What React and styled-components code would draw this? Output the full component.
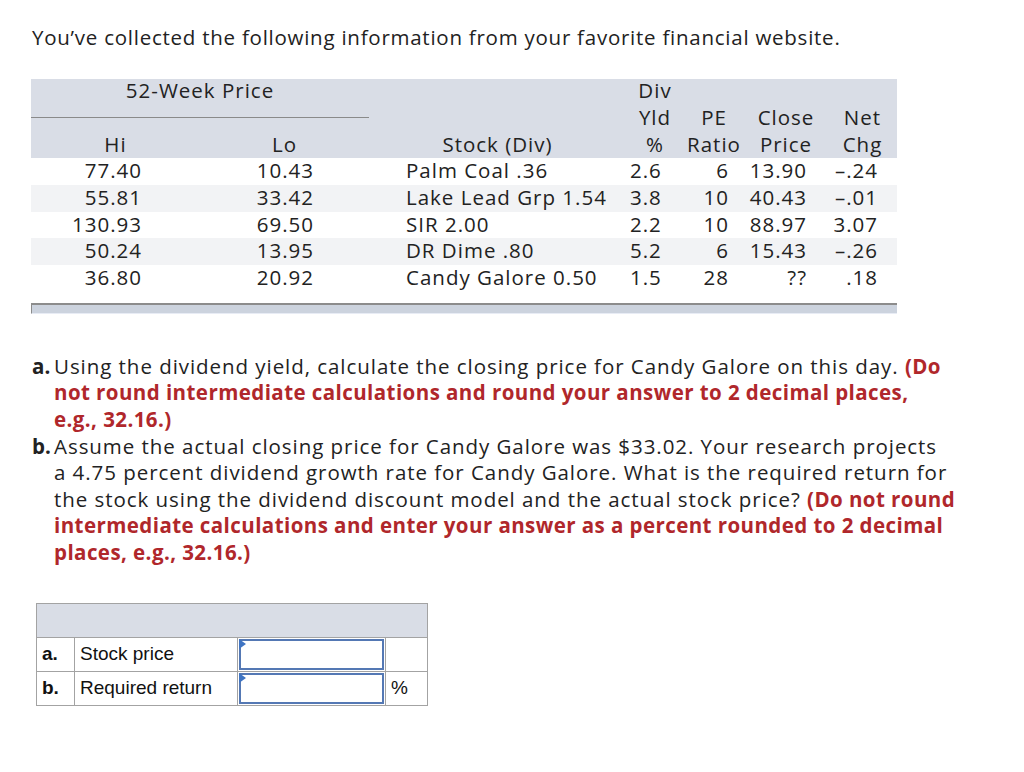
import React from "react";
import styled, { createGlobalStyle } from "styled-components";

const Global = createGlobalStyle`
  html, body { margin: 0; padding: 0; background: #fff; }
  body { font-family: "Open Sans", "Lato", sans-serif; color: #222; }
`;

const Page = styled.div`
  width: 1024px;
  min-height: 772px;
  padding: 24px 0 0 32px;
  box-sizing: border-box;
`;

const Title = styled.p`
  margin: 0;
  font-size: 20.5px;
  line-height: 26px;
  letter-spacing: 0.75px;
`;

const COLS = "169px 169px 257px 58px 60px 84px 69px";

const DataTable = styled.div`
  margin: 29px 0 0 -1px;
  width: 866px;
  display: flex;
  flex-direction: column;
  font-size: 20.5px;
  letter-spacing: 1px;
`;

const Head = styled.div`
  display: grid;
  grid-template-columns: ${COLS};
  grid-template-rows: 27px 27px 25px;
  align-items: start;
  background: #d9dde6;
`;

const HeadCell = styled.div`
  grid-column: ${(p) => p.$col};
  grid-row: ${(p) => p.$row};
  text-align: center;
  line-height: 22px;
`;

const GroupCell = styled.div`
  grid-column: 1 / 3;
  grid-row: 1 / 3;
  height: 38px;
  border-bottom: 1px solid #8a8a8a;
  text-align: center;
  line-height: 22px;
`;

const Row = styled.div`
  display: grid;
  grid-template-columns: ${COLS};
  height: 26.75px;
  line-height: 25.5px;
  background: ${(p) => (p.$shade ? "#f2f3f5" : "#fff")};
`;

const Cell = styled.div`
  text-align: ${(p) => p.$align || "right"};
  padding-right: ${(p) => p.$pr || 0}px;
  padding-left: ${(p) => p.$pl || 0}px;
  white-space: nowrap;
`;

const BottomBar = styled.div`
  margin-top: 11px;
  height: 8px;
  background: #ccd3de;
  border-top: 2px solid #8c8c8c;
  border-left: 1px solid #8c8c8c;
  border-bottom: 1px solid #e8ecf5;
`;

const Questions = styled.div`
  margin-top: 39px;
  font-size: 20.5px;
  line-height: 26.6px;
  letter-spacing: 0.95px;
`;

const Item = styled.div`
  display: grid;
  grid-template-columns: 22px auto;
  white-space: nowrap;
`;

const Letter = styled.span`
  font-weight: 700;
  letter-spacing: 0;
`;

const Red = styled.span`
  color: #b0272b;
  font-weight: 700;
  letter-spacing: 0.43px;
`;

const AnswerTable = styled.table`
  margin: 37px 0 0 4px;
  border-collapse: collapse;
  font-family: "Liberation Sans", Arial, sans-serif;
  font-size: 19px;
  letter-spacing: 0;
  color: #111;
`;

const HeaderCell = styled.td`
  height: 33px;
  padding: 0;
  background: #d9dde6;
  border: 1px solid #a3a3a3;
`;

const Td = styled.td`
  height: 33px;
  border: 1px solid #a3a3a3;
  padding: 0 5px;
  width: ${(p) => p.$w}px;
  font-weight: ${(p) => (p.$bold ? 700 : 400)};
  box-sizing: border-box;
`;

const InputTd = styled.td`
  width: 148px;
  height: 33px;
  border: 1px solid #a3a3a3;
  padding: 1px;
  box-sizing: border-box;
`;

const InputBox = styled.div`
  position: relative;
  height: 31px;
  border: 2px solid #5478b4;
  box-sizing: border-box;
  &::before {
    content: "";
    position: absolute;
    left: -2px;
    top: -2px;
    border-top: 5px solid transparent;
    border-bottom: 5px solid transparent;
    border-left: 7px solid #3f74c3;
  }
`;

const rows = [
  ["77.40", "10.43", "Palm Coal .36", "2.6", "6", "13.90", "–.24"],
  ["55.81", "33.42", "Lake Lead Grp 1.54", "3.8", "10", "40.43", "–.01"],
  ["130.93", "69.50", "SIR 2.00", "2.2", "10", "88.97", "3.07"],
  ["50.24", "13.95", "DR Dime .80", "5.2", "6", "15.43", "–.26"],
  ["36.80", "20.92", "Candy Galore 0.50", "1.5", "28", "??", ".18"],
];

export default function App() {
  return (
    <Page>
      <Global />
      <Title>You’ve collected the following information from your favorite financial website.</Title>
      <DataTable>
        <Head>
          <GroupCell>52-Week Price</GroupCell>
          <HeadCell $col={4} $row={1}>Div</HeadCell>
          <HeadCell $col={4} $row={2}>Yld</HeadCell>
          <HeadCell $col={5} $row={2}>PE</HeadCell>
          <HeadCell $col={6} $row={2}>Close</HeadCell>
          <HeadCell $col={7} $row={2}>Net</HeadCell>
          <HeadCell $col={1} $row={3}>Hi</HeadCell>
          <HeadCell $col={2} $row={3}>Lo</HeadCell>
          <HeadCell $col={3} $row={3}>Stock (Div)</HeadCell>
          <HeadCell $col={4} $row={3}>%</HeadCell>
          <HeadCell $col={5} $row={3}>Ratio</HeadCell>
          <HeadCell $col={6} $row={3}>Price</HeadCell>
          <HeadCell $col={7} $row={3}>Chg</HeadCell>
        </Head>
        {rows.map((r, i) => (
          <Row key={i} $shade={i % 2 === 1}>
            <Cell $pr={58}>{r[0]}</Cell>
            <Cell $pr={55}>{r[1]}</Cell>
            <Cell $align="left" $pl={37}>{r[2]}</Cell>
            <Cell $align="left" $pl={4}>{r[3]}</Cell>
            <Cell $pr={15}>{r[4]}</Cell>
            <Cell $pr={21}>{r[5]}</Cell>
            <Cell $pr={19}>{r[6]}</Cell>
          </Row>
        ))}
        <BottomBar />
      </DataTable>
      <Questions>
        <Item>
          <Letter>a.</Letter>
          <span>
            Using the dividend yield, calculate the closing price for Candy Galore on this day. <Red>(Do</Red>
            <br />
            <Red>not round intermediate calculations and round your answer to 2 decimal places,</Red>
            <br />
            <Red>e.g., 32.16.)</Red>
          </span>
        </Item>
        <Item>
          <Letter>b.</Letter>
          <span>
            Assume the actual closing price for Candy Galore was $33.02. Your research projects
            <br />
            a 4.75 percent dividend growth rate for Candy Galore. What is the required return for
            <br />
            the stock using the dividend discount model and the actual stock price? <Red>(Do not round</Red>
            <br />
            <Red>intermediate calculations and enter your answer as a percent rounded to 2 decimal</Red>
            <br />
            <Red>places, e.g., 32.16.)</Red>
          </span>
        </Item>
      </Questions>
      <AnswerTable>
        <tbody>
          <tr>
            <HeaderCell colSpan={4} />
          </tr>
          <tr>
            <Td $w={38} $bold>a.</Td>
            <Td $w={163}>Stock price</Td>
            <InputTd><InputBox /></InputTd>
            <Td $w={42}></Td>
          </tr>
          <tr>
            <Td $w={38} $bold>b.</Td>
            <Td $w={163}>Required return</Td>
            <InputTd><InputBox /></InputTd>
            <Td $w={42}>%</Td>
          </tr>
        </tbody>
      </AnswerTable>
    </Page>
  );
}
